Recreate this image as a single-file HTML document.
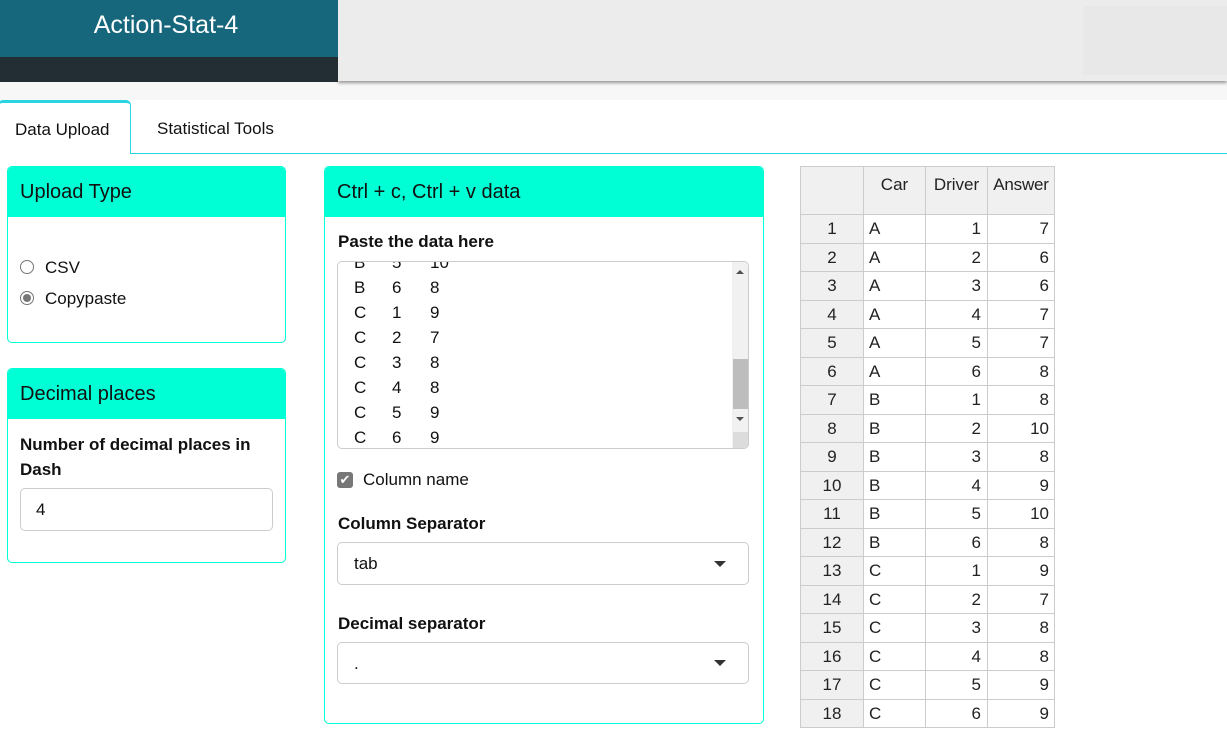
<!DOCTYPE html>
<html><head><meta charset="utf-8"><style>
*{box-sizing:border-box;margin:0;padding:0}
body{width:1227px;height:738px;overflow:hidden;background:#fff;font-family:"Liberation Sans",sans-serif;color:#111;position:relative}
.a{position:absolute}
.card{position:absolute;border:1px solid #00ffd5;border-radius:5px;background:#fff;overflow:hidden}
.ch{background:#00ffd5;height:50px;padding-left:12px;font-size:20px;line-height:50px;color:#111;border-radius:4px 4px 0 0}
.lbl{position:absolute;font-weight:bold;font-size:17px}
.inp{position:absolute;border:1px solid #ccc;border-radius:5px;background:#fff;font-size:17px}
.tri{position:absolute;width:0;height:0;border-left:6px solid transparent;border-right:6px solid transparent;border-top:6px solid #333}
.tc{position:absolute;border-right:1px solid #ccc;border-bottom:1px solid #ccc;font-size:17px;color:#222}
</style></head><body>
<div class="a" style="left:0;top:0;width:1227px;height:100px;background:#f7f7f7"></div>
<div class="a" style="left:338px;top:0;width:889px;height:81px;background:#ececec;box-shadow:0 2px 3px #999"></div>
<div class="a" style="left:1083px;top:6px;width:144px;height:69px;background:#e8e8e8"></div>
<div class="a" style="left:0;top:0;width:338px;height:57px;background:#17677c;color:#fff;font-size:25px;text-align:center;line-height:50px;padding-right:6px">Action-Stat-4</div>
<div class="a" style="left:0;top:57px;width:338px;height:25px;background:#232e34"></div>
<div class="a" style="left:0;top:153px;width:1227px;height:1px;background:#2ad4e0"></div>
<div class="a" style="left:-2px;top:100px;width:133px;height:54px;border:1px solid #2ad4e0;border-top:3px solid #2ad4e0;border-bottom:none;border-radius:5px 5px 0 0;background:#fff;font-size:17px;padding:17px 0 0 16px">Data Upload</div>
<div class="a" style="left:157px;top:119px;font-size:17px">Statistical Tools</div>

<div class="card" style="left:7px;top:166px;width:279px;height:177px"><div class="ch">Upload Type</div></div>
<div class="a" style="left:20px;top:260px;width:14px;height:14px;border:1px solid #777;border-radius:50%;background:#fff"></div>
<div class="a" style="left:45px;top:258px;font-size:17px">CSV</div>
<div class="a" style="left:20px;top:291px;width:14px;height:14px;border:1px solid #777;border-radius:50%;background:#fff"><div class="a" style="left:2px;top:2px;width:8px;height:8px;border-radius:50%;background:#777"></div></div>
<div class="a" style="left:45px;top:289px;font-size:17px">Copypaste</div>

<div class="card" style="left:7px;top:368px;width:279px;height:195px"><div class="ch">Decimal places</div></div>
<div class="lbl" style="left:20px;top:432px;line-height:25px;width:255px">Number of decimal places in Dash</div>
<div class="inp" style="left:20px;top:488px;width:253px;height:43px;padding:11px 0 0 15px">4</div>

<div class="card" style="left:324px;top:166px;width:440px;height:558px"><div class="ch">Ctrl + c, Ctrl + v data</div></div>
<div class="lbl" style="left:338px;top:232px">Paste the data here</div>
<div class="inp" style="left:337px;top:261px;width:412px;height:188px;overflow:hidden">
<div class="a" style="left:394px;top:0;width:17px;height:186px;background:#f1f1f1"></div>
<div class="a" style="left:395px;top:97px;width:15px;height:50px;background:#bdbdbd"></div>
<div class="a" style="left:398px;top:8px;border-left:4px solid transparent;border-right:4px solid transparent;border-bottom:4px solid #505050"></div>
<div class="a" style="left:398px;top:155px;border-left:4px solid transparent;border-right:4px solid transparent;border-top:4px solid #505050"></div>
<div class="a" style="left:395px;top:170px;width:16px;height:17px;background:#dcdcdc"></div>
<div class="a" style="left:16px;top:-12px;font-size:17px;line-height:25px;white-space:pre;tab-size:38px">B	5	10
B	6	8
C	1	9
C	2	7
C	3	8
C	4	8
C	5	9
C	6	9</div></div>
<div class="a" style="left:337px;top:472px;width:16px;height:16px;background:#777;border-radius:3px;color:#fff;font-size:13px;text-align:center;line-height:16px">✔</div>
<div class="a" style="left:363px;top:470px;font-size:17px">Column name</div>
<div class="lbl" style="left:338px;top:514px">Column Separator</div>
<div class="inp" style="left:337px;top:542px;width:412px;height:43px;padding:11px 0 0 16px">tab</div>
<div class="tri" style="left:714px;top:561px"></div>
<div class="lbl" style="left:338px;top:614px">Decimal separator</div>
<div class="inp" style="left:337px;top:642px;width:412px;height:42px;padding:11px 0 0 16px">.</div>
<div class="tri" style="left:714px;top:660px"></div>

<div class="a" style="left:800px;top:166px;width:255px;height:562px;border-left:1px solid #ccc;border-top:1px solid #ccc">
<div class="tc" style="left:0;top:0;width:63px;height:48px;background:#f0f0f0"></div>
<div class="tc" style="left:63px;top:0;width:62px;height:48px;background:#f0f0f0;text-align:center;padding-top:8px">Car</div>
<div class="tc" style="left:125px;top:0;width:62px;height:48px;background:#f0f0f0;text-align:center;padding-top:8px">Driver</div>
<div class="tc" style="left:187px;top:0;width:67px;height:48px;background:#f0f0f0;text-align:center;padding-top:8px;letter-spacing:-0.2px">Answer</div>
<div id="rows"></div>
</div>
<script>
var d=[["A",1,7],["A",2,6],["A",3,6],["A",4,7],["A",5,7],["A",6,8],["B",1,8],["B",2,10],["B",3,8],["B",4,9],["B",5,10],["B",6,8],["C",1,9],["C",2,7],["C",3,8],["C",4,8],["C",5,9],["C",6,9]];
var h="";for(var i=0;i<18;i++){var t=48+i*28.5,y='top:'+t+'px;height:28.5px;line-height:27px;';
h+='<div class="tc" style="left:0;'+y+'width:63px;background:#f0f0f0;text-align:center">'+(i+1)+'</div>';
h+='<div class="tc" style="left:63px;'+y+'width:62px;padding-left:5px">'+d[i][0]+'</div>';
h+='<div class="tc" style="left:125px;'+y+'width:62px;text-align:right;padding-right:6px">'+d[i][1]+'</div>';
h+='<div class="tc" style="left:187px;'+y+'width:67px;text-align:right;padding-right:5px">'+d[i][2]+'</div>';}
document.getElementById("rows").outerHTML=h;
</script>
</body></html>
